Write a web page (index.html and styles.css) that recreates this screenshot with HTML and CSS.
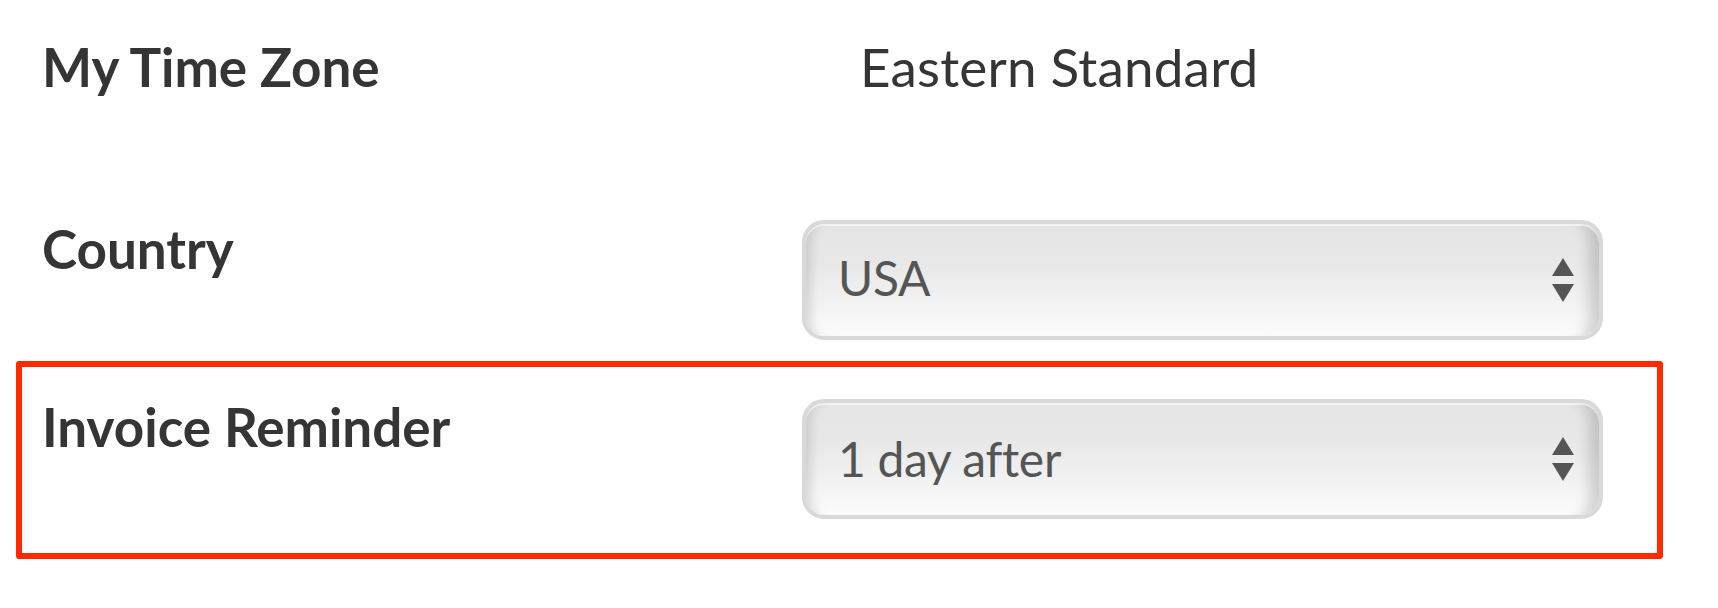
FILE: index.html
```html
<!DOCTYPE html>
<html lang="en">
<head>
<meta charset="utf-8">
<title>Settings</title>
<link rel="stylesheet" href="styles.css">
</head>
<body>
<div class="settings">
  <div class="row row-static">
    <div class="label">My Time Zone</div>
    <div class="value">Eastern Standard</div>
  </div>
  <div class="row">
    <div class="label">Country</div>
    <div class="select">
      <span class="select-text">USA</span>
      <svg class="arrows" width="22" height="44" viewBox="0 0 22 44" aria-hidden="true">
        <polygon points="0,18 11,0 22,18" fill="#555"/>
        <polygon points="0,26 22,26 11,44" fill="#555"/>
      </svg>
    </div>
  </div>
  <div class="row row-highlight">
    <div class="label">Invoice Reminder</div>
    <div class="select">
      <span class="select-text">1 day after</span>
      <svg class="arrows" width="22" height="44" viewBox="0 0 22 44" aria-hidden="true">
        <polygon points="0,18 11,0 22,18" fill="#555"/>
        <polygon points="0,26 22,26 11,44" fill="#555"/>
      </svg>
    </div>
  </div>
</div>
</body>
</html>
```

FILE: styles.css
```css
html, body {
  margin: 0;
  padding: 0;
  background: #ffffff;
}

body {
  font-family: Lato, "Open Sans", "Liberation Sans", sans-serif;
  color: #333333;
}

.settings {
  padding: 36px 55px 0 16px;
  width: 1647px;
}

.row {
  display: flex;
  align-items: flex-start;
  padding-left: 26px;
}

.row-static {
  margin-bottom: 120px;
}

.row + .row {
  margin-bottom: 21px;
}

.row-highlight {
  border: 6px solid #ff2a00;
  border-radius: 3px;
  padding: 29px 0 34px 20px;
}

.label {
  width: 760px;
  flex: none;
  font-size: 53px;
  line-height: 62px;
  font-weight: 700;
  color: #353535;
}

.value {
  padding-left: 58px;
  font-size: 53px;
  line-height: 62px;
  font-weight: 400;
  color: #353535;
  letter-spacing: 0.2px;
}

.select {
  box-sizing: border-box;
  width: 801px;
  height: 120px;
  margin-top: 2px;
  border: 4px solid #d9d9d9;
  border-radius: 22px;
  display: flex;
  align-items: center;
  justify-content: space-between;
  padding: 0 25px 5px 32px;
  background: linear-gradient(to bottom, #e5e5e5 0%, #e8e8e8 35%, #efefef 60%, #f7f7f7 85%, #fcfcfc 100%);
  box-shadow: inset 0 2px 0 rgba(255, 255, 255, 0.6),
              inset 14px 0 12px -10px rgba(0, 0, 0, 0.14),
              inset -22px 0 14px -12px rgba(0, 0, 0, 0.16);
}

.row-highlight .select {
  margin-top: 3px;
  padding-bottom: 0;
}

.select-text {
  font-size: 48px;
  line-height: 58px;
  font-weight: 400;
  color: #555555;
  letter-spacing: -0.3px;
}

.arrows {
  flex: none;
  display: block;
  margin-top: 5px;
}

.row-highlight .arrows {
  margin-top: 0;
}
```
